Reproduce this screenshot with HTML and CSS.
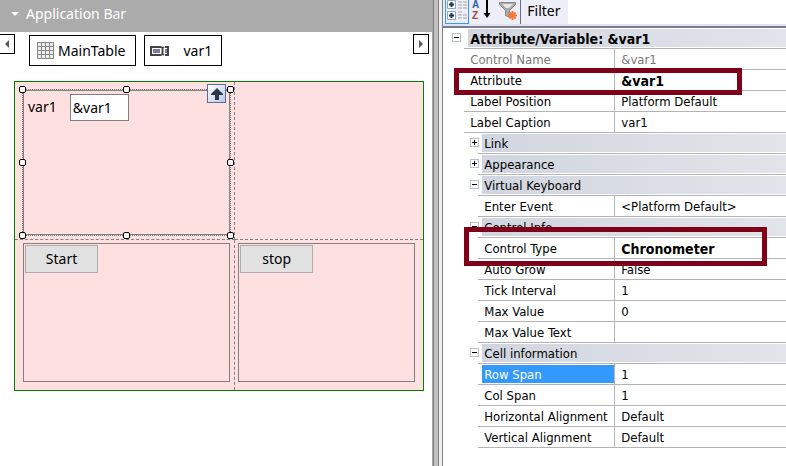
FILE: index.html
```html
<!DOCTYPE html>
<html lang="en">
<head>
<meta charset="utf-8">
<title>Layout editor</title>
<link rel="stylesheet" href="styles.css">
</head>
<body>
<main class="workspace">
  <section class="designer">
    <header class="app-bar">
      <svg class="caret" viewBox="0 0 8 4" aria-hidden="true"><path d="M0 0h8L4 4z"/></svg>
      <h1>Application Bar</h1>
    </header>
    <nav class="crumbs">
      <button class="scroll prev" aria-label="Previous"><svg viewBox="0 0 4 8" aria-hidden="true"><path d="M4 0v8L0 4z"/></svg></button>
      <button class="crumb">
        <svg class="table-icon" viewBox="0 0 17 17" aria-hidden="true"><path class="face" d="M0 0h17v17H0z"/><path class="wire" d="M0 .5h17M0 4.500h17M0 8.500h17M0 12.500h17M0 16.500h17M.5 0v17M4.500 0v17M8.500 0v17M12.500 0v17M16.500 0v17"/></svg>
        <span>MainTable</span>
      </button>
      <button class="crumb variable">
        <svg class="var-icon" viewBox="0 0 19 10" aria-hidden="true"><path class="frame" d="M11 1H1v8h10M15 1h3v8h-3M11 1l1.500 1L14 1M11 9l1.500-1L14 9M12.500 2v6"/><path class="fill" d="M3 3h7v4H3zM15 3h2v4h-2z"/></svg>
        <span>var1</span>
      </button>
      <button class="scroll next" aria-label="Next"><svg viewBox="0 0 4 8" aria-hidden="true"><path d="M0 0v8l4-4z"/></svg></button>
    </nav>
    <div class="canvas">
      <div class="cell">
        <div class="box selected">
          <label for="var1">var1</label>
          <input id="var1" type="text" value="&amp;var1">
          <button class="parent" aria-label="Select parent"><svg viewBox="0 0 12 12" aria-hidden="true"><path d="M6 0l6 6v1H8v5H4V7H0V6z"/></svg></button>
          <i class="handle top left"></i><i class="handle top center"></i><i class="handle top right"></i>
          <i class="handle middle left"></i><i class="handle middle right"></i>
          <i class="handle bottom left"></i><i class="handle bottom center"></i><i class="handle bottom right"></i>
        </div>
      </div>
      <div class="cell"></div>
      <div class="cell"><div class="box"><button class="action">Start</button></div></div>
      <div class="cell"><div class="box"><button class="action">stop</button></div></div>
    </div>
  </section>
  <div class="splitter"></div>
  <section class="properties">
    <div class="toolbar">
      <div class="tools">
        <button class="tool active" aria-label="Categorized"><svg viewBox="0 0 22 24" aria-hidden="true"><path class="pane" d="M1.500 .500h8v8h-8zM1.500 11.500h8v8h-8z"/><path class="plus" d="M3 4.500h5M5.500 2v5M3 15.500h5M5.500 13v5"/><path class="lines" d="M12 2h4M17 2h4M12 5h4M17 5h4M12 8h4M17 8h4M12 12h4M12 15h4M17 15h4M12 18h4M17 18h4"/></svg></button>
        <button class="tool" aria-label="Alphabetical"><svg viewBox="0 0 22 24" aria-hidden="true"><text class="letter-a" x="1" y="8">A</text><text class="letter-z" x="1" y="19">Z</text><path class="arrow" d="M16 0v14"/><path class="tip" d="M12.500 13h7L16 18z"/></svg></button>
        <button class="tool clear" aria-label="Clear filter"><svg viewBox="0 0 22 24" aria-hidden="true"><path class="funnel" d="M2.500 2.500h16v2l-6 6v7l-4-2v-5l-6-6z"/><path class="shade" d="M5 4h11l-4 4H9z"/><path class="spark" d="M15.500 11v9M11 15.500h9M12.500 12.500l6 6M18.500 12.500l-6 6"/></svg></button>
        <button class="filter">Filter</button>
      </div>
    </div>
    <table class="grid">
      <colgroup><col class="c-gutter"><col class="c-indent"><col class="c-name"><col></colgroup>
      <tbody>
        <tr class="root"><td><button class="toggle" aria-label="Collapse"></button></td><th colspan="3"><div class="band">Attribute/Variable: &amp;var1</div></th></tr>
        <tr class="muted"><td></td><th colspan="2">Control Name</th><td>&amp;var1</td></tr>
        <tr class="changed"><td></td><th colspan="2" class="marked">Attribute</th><td>&amp;var1</td></tr>
        <tr><td></td><th colspan="2">Label Position</th><td>Platform Default</td></tr>
        <tr><td></td><th colspan="2">Label Caption</th><td>var1</td></tr>
        <tr class="group"><td></td><td><button class="toggle closed" aria-label="Expand"></button></td><th colspan="2"><div class="band">Link</div></th></tr>
        <tr class="group"><td></td><td><button class="toggle closed" aria-label="Expand"></button></td><th colspan="2"><div class="band">Appearance</div></th></tr>
        <tr class="group"><td></td><td><button class="toggle" aria-label="Collapse"></button></td><th colspan="2"><div class="band">Virtual Keyboard</div></th></tr>
        <tr><td></td><td></td><th>Enter Event</th><td>&lt;Platform Default&gt;</td></tr>
        <tr class="group"><td></td><td><button class="toggle" aria-label="Collapse"></button></td><th colspan="2"><div class="band">Control Info</div></th></tr>
        <tr class="changed"><td></td><td></td><th class="marked inner">Control Type</th><td>Chronometer</td></tr>
        <tr><td></td><td></td><th>Auto Grow</th><td>False</td></tr>
        <tr><td></td><td></td><th>Tick Interval</th><td>1</td></tr>
        <tr><td></td><td></td><th>Max Value</th><td>0</td></tr>
        <tr><td></td><td></td><th>Max Value Text</th><td></td></tr>
        <tr class="group"><td></td><td><button class="toggle" aria-label="Collapse"></button></td><th colspan="2"><div class="band">Cell information</div></th></tr>
        <tr class="current"><td></td><td></td><th><div class="band">Row Span</div></th><td>1</td></tr>
        <tr><td></td><td></td><th>Col Span</th><td>1</td></tr>
        <tr><td></td><td></td><th>Horizontal Alignment</th><td>Default</td></tr>
        <tr><td></td><td></td><th>Vertical Alignment</th><td>Default</td></tr>
      </tbody>
    </table>
  </section>
</main>
</body>
</html>
```
FILE: styles.css
```css
*, *::after { box-sizing: border-box; }
body { margin: 0; background: #fff; color: #000; font: 14px/20px "Noto Sans", "Open Sans", sans-serif; }
button, input { font: inherit; color: inherit; margin: 0; padding: 0; border-radius: 0; }
svg { display: block; }

.workspace { display: grid; grid-template-columns: 55% 11px minmax(0, 1fr); min-height: 100vh; overflow: hidden; }

.app-bar { display: flex; align-items: center; gap: 7px; height: 32px; padding: 0 0 4px 11px; background: #ababab; color: #fff; }
.app-bar h1 { margin: 0; font-size: 14px; font-weight: 400; }
.caret { width: 8px; height: 4px; fill: #fff; }

.crumbs { display: flex; align-items: flex-start; padding: 2px 3px 0 0; }
.scroll { display: flex; align-items: center; justify-content: center; width: 16px; height: 20px; border: 1px solid #000; background: #fff; }
.scroll svg { width: 4px; height: 8px; fill: #555; }
.prev { width: 15px; border-left: 0; }
.next { margin-left: auto; }
.crumb { display: flex; align-items: center; gap: 4px; height: 31px; margin: 1px 0 0 14px; padding: 0 10px 0 7px; border: 1px solid #000; background: #fff; }
.variable { gap: 14px; margin-left: 8px; padding: 0 9px 0 5px; }
.table-icon { width: 17px; height: 17px; }
.table-icon .face { fill: #eee; }
.table-icon .wire { fill: none; stroke: #888; }
.var-icon { width: 19px; height: 10px; }
.var-icon .frame { fill: none; stroke: #444; stroke-width: 2; }
.var-icon .fill { fill: #8078a8; }

.canvas { display: grid; grid-template-columns: minmax(0, 220fr) minmax(0, 188fr); grid-template-rows: 158px 150px; margin: 15px 8px 0 14px; border: 1px solid #008000; background: #ffe0e0; }
.cell { padding: 3px 8px 8px 3px; }
.cell:nth-child(odd) { padding: 3px 4px 8px 8px; border-right: 1px dashed #808080; }
.cell:nth-child(-n+2) { border-bottom: 1px dashed #808080; }
.cell:first-child { padding: 8px 4px 4px 8px; }
.box { height: 100%; padding: 1px; border: 1px solid #808080; }
.selected { position: relative; display: flex; align-items: flex-start; gap: 13px; padding: 3px 4px; outline: 1px dotted #707070; }
.selected label { padding-top: 3px; }
.selected input { width: 59px; height: 27px; padding: 0 2px 1px; border: 1px solid #808080; background: #fff; }
.parent { position: absolute; top: -7px; right: 3px; display: grid; place-items: center; width: 19px; height: 19px; border: 1px solid #5a6e94; background: linear-gradient(135deg, #fff, #b9c8ea); }
.parent svg { width: 12px; height: 12px; fill: #2c3a48; }
.handle { position: absolute; width: 7px; height: 7px; border: 1px solid #000; border-radius: 2px; background: #fff; }
.handle.top { top: -5px; }
.handle.middle { top: calc(50% - 4px); }
.handle.bottom { bottom: -5px; }
.handle.left { left: -5px; }
.handle.center { left: calc(50% - 4px); }
.handle.right { right: -5px; }
.action { display: block; width: 73px; height: 28px; border: 1px solid #adadad; background: #e1e1e1; }

.splitter { border: solid #808080; border-width: 0 1px; background: linear-gradient(to right, #808080 1px, #c0c0c0 1px 5px, #808080 5px 6px, #f0f0f0 6px); border-left-color: #a8a8a8; }

.toolbar { height: 28px; border-bottom: 2px solid #7b7b92; background: linear-gradient(#fff 24px, #e0e4ec 24px); }
.tools { display: inline-flex; align-items: flex-start; height: 24px; padding-left: 2px; background: #eeeef8; vertical-align: top; }
.tool { width: 26px; height: 24px; border: 0; background: none; }
.tool svg { width: 22px; height: 24px; margin: 0 auto; fill: none; }
.clear { width: 25px; }
.filter { height: 24px; padding: 0 7px 2px 6px; border: 0; border-left: 1px solid #6d6d8c; background: none; }
.active { width: 24px; border: 1px solid #3399ff; border-top: 0; }
.pane { fill: #fff; stroke: #8da6cb; }
.plus { stroke: #17375e; stroke-width: 2; }
.lines { stroke: #a5a5a5; }
.letter-a, .letter-z { font: bold 10px "Liberation Sans", sans-serif; }
.letter-a { fill: #2f62b0; }
.letter-z { fill: #a04050; }
.arrow { stroke: #000; stroke-width: 2; }
.tip { fill: #000; }
.funnel { fill: #aaa; stroke: #888; }
.shade { fill: #e6e6e6; }
.spark { stroke: #f47a35; stroke-width: 2; }

.grid { width: 100%; table-layout: fixed; border-collapse: separate; border-spacing: 0; font-family: "DejaVu Sans Condensed", "Noto Sans", sans-serif; font-size: 13px; line-height: 18px; }
.c-gutter { width: 21px; }
.c-indent { width: 14px; }
.c-name { width: 136px; }
.grid td, .grid th { height: 21px; padding: 2px 0 0 6px; text-align: left; font-weight: 400; white-space: nowrap; vertical-align: top; }
.grid th, .grid th + td { border-bottom: 1px solid #b4b4b4; }
.grid th + td { border-left: 1px solid #b4b4b4; }
.grid .root th, .grid .group th, .grid .current th { padding: 1px 0 0 4px; }
.grid .band { height: 18px; padding-left: 2px; line-height: 20px; background: linear-gradient(to right, #d1d5df, #e1e4ea); }
.grid .root .band, .grid .changed th + td { font-size: 14px; font-weight: 700; }
.muted { color: #777; }
.grid .current .band { background: #39f; color: #fff; }
.toggle { display: block; width: 9px; height: 9px; margin-top: 3px; border: 1px solid #b7bfd0; background: linear-gradient(#000, #000) center / 5px 1px no-repeat #fff; }
.closed { background: linear-gradient(#000, #000) center / 5px 1px no-repeat, linear-gradient(#000, #000) center / 1px 5px no-repeat #fff; }
.root .toggle { margin-left: 3px; }
.marked { position: relative; z-index: 1; }
.marked::after { content: ""; position: absolute; top: -2px; left: -10px; width: 288px; height: 27px; border: 5px solid #800018; pointer-events: none; }
.inner::after { top: -11px; left: -14px; width: 303px; height: 39px; }
```
